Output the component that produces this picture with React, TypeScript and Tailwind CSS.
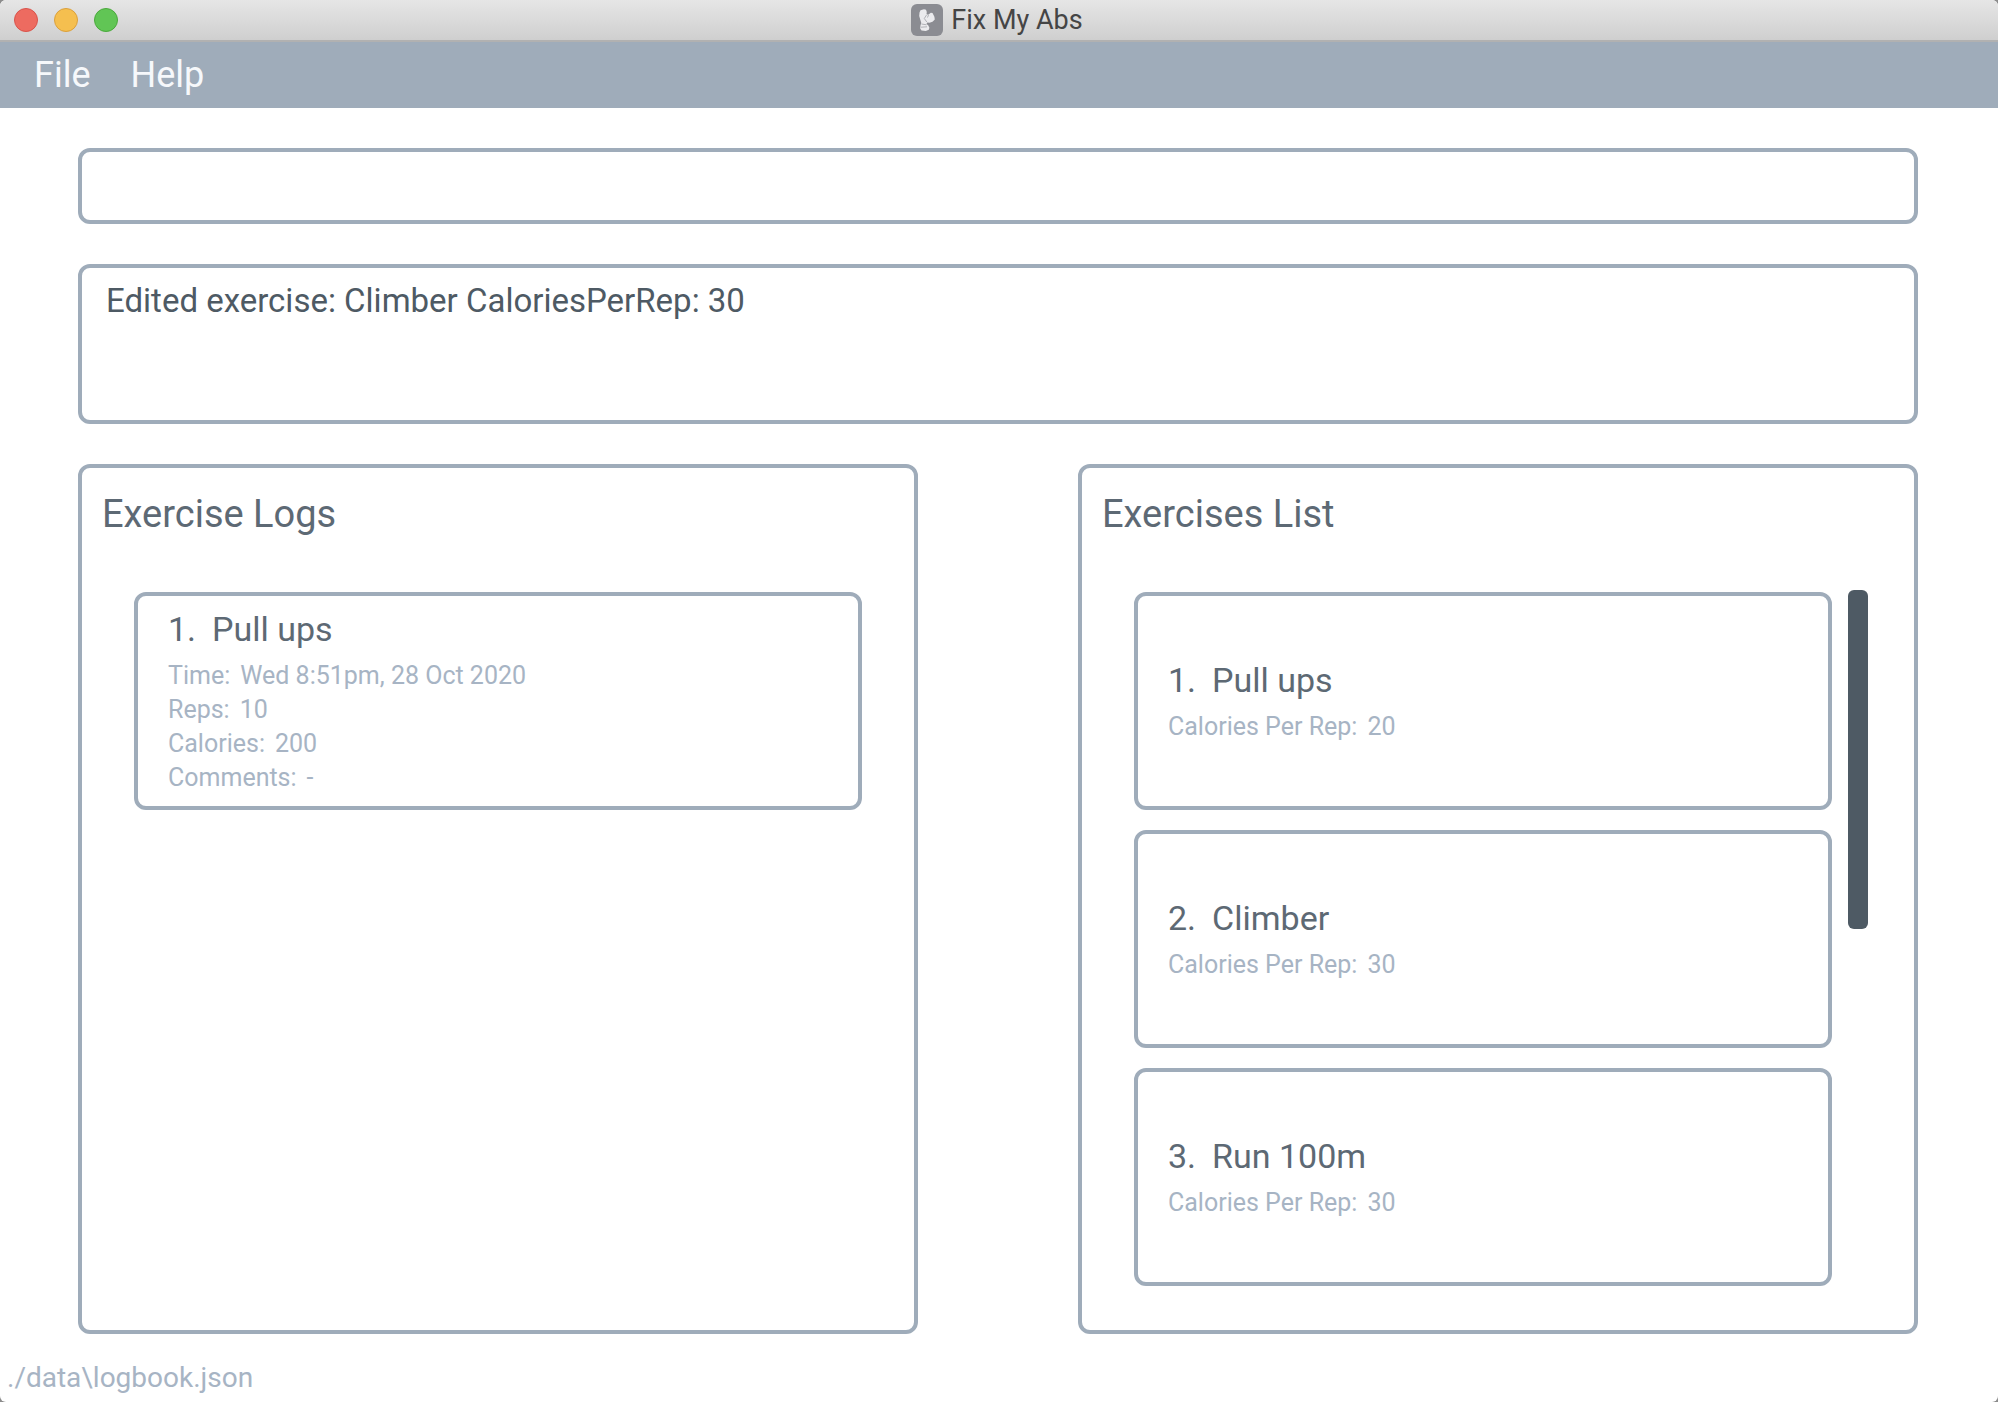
import React from "react";

const logs = [
  {
    name: "Pull ups",
    details: [
      ["Time:", "Wed 8:51pm, 28 Oct 2020"],
      ["Reps:", "10"],
      ["Calories:", "200"],
      ["Comments:", "-"],
    ],
  },
];

const exercises = [
  { name: "Pull ups", details: [["Calories Per Rep:", "20"]] },
  { name: "Climber", details: [["Calories Per Rep:", "30"]] },
  { name: "Run 100m", details: [["Calories Per Rep:", "30"]] },
];

function AppIcon() {
  return (
    <svg viewBox="0 0 32 32" className="size-8" aria-hidden="true">
      <rect width="32" height="32" rx="6" fill="#8b8c92" />
      <path
        d="M9.500 6.200l3.500-1 2 .6.800 2.200-.3 2.200 1.700.6 2.600-2 1.700.3 1.900 3.700.4 2.600-2.300 2.400-3 1-2.200-.3-.8 1.500 1.700 1.300 1.200 2.500-.6 2-3 1.200-4.300-.4-1.300-2 .3-3.300.8-2.300-.9-3-1.200-4 .3-3.500z"
        fill="#ebebee"
      />
      <path
        d="M15.500 11l-2.200 3.500 2.500 3.500M17.500 11l-1 2.500M10.500 20l5 .8M10 23.200l6-.4"
        fill="none"
        stroke="#a9aab0"
        strokeWidth="0.9"
      />
    </svg>
  );
}

type Item = { name: string; details: string[][] };

function Card({ item, index }: { item: Item; index: number }) {
  return (
    <li className="flex h-[218px] flex-col justify-center rounded-xl border-4 border-[#9facba] px-[30px]">
      <h3 className="mb-2 flex gap-4 text-[34px] leading-[44px] text-[#5d6974]">
        <span>{index + 1}.</span>
        <span>{item.name}</span>
      </h3>
      <dl className="text-[25px] leading-[34px] text-[#a7b4c4]">
        {item.details.map(([label, value]) => (
          <div key={label} className="flex gap-2.5">
            <dt>{label}</dt>
            <dd>{value}</dd>
          </div>
        ))}
      </dl>
    </li>
  );
}

function Panel({ title, children }: { title: string; children: React.ReactNode }) {
  return (
    <section className="flex min-w-0 flex-1 flex-col rounded-xl border-4 border-[#9facba] pt-5">
      <h2 className="px-5 text-[38px] leading-[52px] text-[#5d6974]">{title}</h2>
      {children}
    </section>
  );
}

export default function App() {
  return (
    <div className="bg-[#8c8c8c] font-[Roboto,sans-serif]">
      <div className="flex min-h-screen flex-col overflow-hidden rounded-md bg-white">
        <header className="relative flex h-[42px] items-center justify-center border-b-2 border-[#b1b1b1] bg-linear-to-b from-[#e6e6e6] to-[#cfcfcf]">
          <div className="absolute left-3.5 flex gap-4">
            <button aria-label="Close" className="size-6 rounded-full border border-[#d9534b] bg-[#ed6b60]" />
            <button aria-label="Minimize" className="size-6 rounded-full border border-[#dba03c] bg-[#f5bf4f]" />
            <button aria-label="Zoom" className="size-6 rounded-full border border-[#4aa93c] bg-[#61c555]" />
          </div>
          <h1 className="flex items-center gap-2 pr-1 text-[27px] text-[#454545]">
            <AppIcon />
            Fix My Abs
          </h1>
        </header>
        <nav className="flex h-[66px] items-center gap-10 bg-[#9facba] px-[34px] text-[36px] text-[#f6f8fb]">
          <button>File</button>
          <button>Help</button>
        </nav>
        <main className="flex flex-1 flex-col gap-10 pt-10 pr-20 pl-[78px]">
          <input
            type="text"
            aria-label="Command"
            className="h-[76px] w-full rounded-xl border-4 border-[#9facba] px-6 text-[34px] text-[#4e5a64] outline-none"
          />
          <output className="block h-40 rounded-xl border-4 border-[#9facba] px-6 py-2.5 text-[33px] leading-[46px] text-[#4e5a64]">
            Edited exercise: Climber CaloriesPerRep: 30
          </output>
          <div className="flex flex-1 gap-40">
            <Panel title="Exercise Logs">
              <ul className="mx-[52px] mt-13 flex flex-col gap-5">
                {logs.map((item, i) => (
                  <Card key={item.name} item={item} index={i} />
                ))}
              </ul>
            </Panel>
            <Panel title="Exercises List">
              <div className="mt-[50px] mr-[46px] ml-[52px] flex gap-4">
                <ul className="flex flex-1 flex-col gap-5 pt-0.5">
                  {exercises.map((item, i) => (
                    <Card key={item.name} item={item} index={i} />
                  ))}
                </ul>
                <div className="h-[339px] w-5 rounded-md bg-[#4e5a64]" />
              </div>
            </Panel>
          </div>
        </main>
        <footer className="px-[7px] pt-5 text-[28px] leading-[48px] text-[#a7b4c4]">./data\logbook.json</footer>
      </div>
    </div>
  );
}
